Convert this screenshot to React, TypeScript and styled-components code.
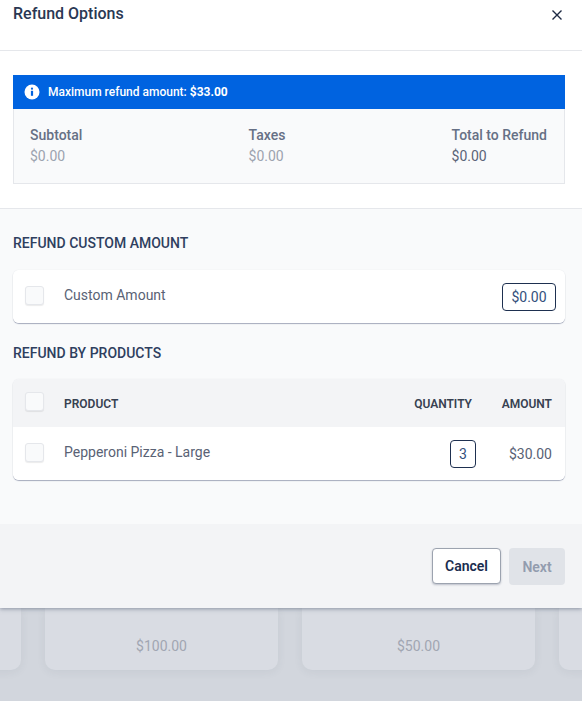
import styled, { createGlobalStyle } from "styled-components";

const GlobalStyle = createGlobalStyle`
  html, body {
    margin: 0;
    padding: 0;
    height: 100%;
    overflow: hidden;
    background: #d2d6dd;
  }
  * { box-sizing: border-box; }
  body { font-family: Roboto, "Liberation Sans", sans-serif; }
`;

const Page = styled.div`
  width: 582px;
  height: 701px;
  display: flex;
  flex-direction: column;
  overflow: hidden;
`;

const Modal = styled.div`
  height: 608px;
  flex: none;
  display: flex;
  flex-direction: column;
  background: #fff;
  box-shadow: 0 1px 4px rgba(75, 85, 110, 0.55);
  position: relative;
`;

const Header = styled.header`
  height: 51px;
  flex: none;
  padding: 5px 19px 0 13px;
  display: flex;
  justify-content: space-between;
  border-bottom: 1px solid #e5e7eb;
`;

const Title = styled.h2`
  margin: 0;
  font-size: 16px;
  line-height: 18px;
  font-weight: 500;
  color: #2a3853;
`;

const CloseButton = styled.button`
  border: none;
  background: none;
  padding: 0;
  margin: 4px 0 0;
  width: 12px;
  height: 12px;
  color: #1e2a44;
  display: flex;
  svg { display: block; }
`;

const Summary = styled.section`
  height: 158px;
  flex: none;
  padding: 24px 17px 24px 13px;
  border-bottom: 1px solid #e5e7eb;
`;

const Alert = styled.div`
  height: 34px;
  display: flex;
  align-items: center;
  gap: 8px;
  padding-left: 11px;
  background: #0063e0;
  color: #fff;
  font-size: 12px;
  font-weight: 500;
  b { font-weight: 700; }
`;

const Totals = styled.div`
  height: 75px;
  display: flex;
  justify-content: space-between;
  padding: 18px 17px 0 16px;
  background: #f9fafb;
  border: 1px solid #e5e7eb;
  border-top: none;
`;

const Stat = styled.div`
  display: flex;
  flex-direction: column;
  gap: 4px;
`;

const StatLabel = styled.span`
  font-size: 14px;
  line-height: 17px;
  font-weight: 500;
  color: #667085;
`;

const StatValue = styled.span<{ $dark?: boolean }>`
  font-size: 14px;
  line-height: 17px;
  color: ${(p) => (p.$dark ? "#5b6478" : "#9ca3af")};
`;

const Body = styled.section`
  flex: 1;
  background: #f9fafb;
  padding: 27px 17px 0 13px;
`;

const SectionTitle = styled.h3<{ $gap: number }>`
  margin: 0 0 ${(p) => p.$gap}px;
  font-size: 14px;
  line-height: 15px;
  font-weight: 500;
  color: #2f3f5f;
`;

const Card = styled.div`
  background: #fff;
  border-radius: 6px;
  box-shadow: 0 0 1px rgba(120, 130, 150, 0.25), 0 1px 1px rgba(100, 110, 140, 0.55);
  margin-bottom: 23px;
  overflow: hidden;
`;

const Row = styled.div<{ $height: number; $head?: boolean; $endPad?: number }>`
  height: ${(p) => p.$height}px;
  display: flex;
  align-items: center;
  padding: 0 ${(p) => p.$endPad ?? 13}px 0 12px;
  background: ${(p) => (p.$head ? "#f3f4f6" : "#fff")};
`;

const Check = styled.span`
  width: 19px;
  height: 19px;
  flex: none;
  margin: 0 20px 3px 0;
  background: #f9fafb;
  border: 1px solid #e5e7eb;
  border-radius: 3px;
  box-shadow: 0 1px 1px rgba(0, 0, 0, 0.08);
`;

const RowText = styled.span`
  flex: 1;
  margin-bottom: 4px;
  font-size: 14px;
  color: #596275;
`;

const BoxValue = styled.span<{ $width: number }>`
  width: ${(p) => p.$width}px;
  height: 28px;
  display: flex;
  align-items: center;
  justify-content: center;
  border: 1px solid #1e3050;
  border-radius: 4px;
  font-size: 14px;
  color: #34507c;
`;

const HeadCell = styled.span<{ $width?: number }>`
  flex: ${(p) => (p.$width ? "none" : "1")};
  width: ${(p) => (p.$width ? `${p.$width}px` : "auto")};
  margin-top: 2px;
  text-align: ${(p) => (p.$width ? "right" : "left")};
  font-size: 12px;
  font-weight: 600;
  color: #374151;
`;

const Amount = styled.span`
  width: 76px;
  text-align: right;
  font-size: 14px;
  color: #596275;
`;

const Footer = styled.footer`
  height: 84px;
  flex: none;
  display: flex;
  justify-content: flex-end;
  gap: 8px;
  padding: 24px 17px 0 0;
  background: #f3f4f6;
`;

const CancelButton = styled.button`
  width: 69px;
  height: 36px;
  border: 1px solid #9ca3af;
  border-radius: 4px;
  background: #fff;
  box-shadow: 0 1px 2px rgba(60, 70, 100, 0.3);
  font: 600 14px Roboto, sans-serif;
  color: #1b2d4f;
  padding: 0;
`;

const NextButton = styled.button`
  width: 56px;
  height: 37px;
  border: none;
  border-radius: 4px;
  background: #e0e3e8;
  font: 600 14px Roboto, sans-serif;
  color: #929cae;
  padding: 0;
`;

const Backdrop = styled.div`
  flex: 1;
  display: flex;
  justify-content: center;
  gap: 24px;
  margin-right: 2px;
`;

const BackCard = styled.div`
  width: 233px;
  height: 62px;
  flex: none;
  padding-top: 30px;
  text-align: center;
  font-size: 14px;
  line-height: 17px;
  color: #a1a6b2;
  background: #d9dce3;
  border-radius: 0 0 10px 10px;
  box-shadow: 0 2px 10px rgba(60, 70, 90, 0.07);
`;

const InfoIcon = () => (
  <svg width="16" height="16" viewBox="0 0 16 16" aria-hidden="true">
    <circle cx="8" cy="8" r="7.5" fill="#fff" />
    <circle cx="8" cy="4.7" r="1.1" fill="#0063e0" />
    <rect x="6.9" y="6.8" width="2.2" height="5" fill="#0063e0" />
  </svg>
);

const CloseIcon = () => (
  <svg width="12" height="12" viewBox="0 0 12 12" fill="none" aria-hidden="true">
    <path d="M1.5 1.5l9 9M10.5 1.5l-9 9" stroke="currentColor" strokeWidth="1.4" />
  </svg>
);

export default function App() {
  return (
    <Page>
      <GlobalStyle />
      <Modal>
        <Header>
          <Title>Refund Options</Title>
          <CloseButton>
            <CloseIcon />
          </CloseButton>
        </Header>
        <Summary>
          <Alert>
            <InfoIcon />
            <span>
              Maximum refund amount: <b>$33.00</b>
            </span>
          </Alert>
          <Totals>
            <Stat>
              <StatLabel>Subtotal</StatLabel>
              <StatValue>$0.00</StatValue>
            </Stat>
            <Stat>
              <StatLabel>Taxes</StatLabel>
              <StatValue>$0.00</StatValue>
            </Stat>
            <Stat>
              <StatLabel>Total to Refund</StatLabel>
              <StatValue $dark>$0.00</StatValue>
            </Stat>
          </Totals>
        </Summary>
        <Body>
          <SectionTitle $gap={19}>REFUND CUSTOM AMOUNT</SectionTitle>
          <Card>
            <Row $height={53} $endPad={9}>
              <Check />
              <RowText>Custom Amount</RowText>
              <BoxValue $width={54}>$0.00</BoxValue>
            </Row>
          </Card>
          <SectionTitle $gap={18}>REFUND BY PRODUCTS</SectionTitle>
          <Card>
            <Row $height={48} $head>
              <Check />
              <HeadCell>PRODUCT</HeadCell>
              <HeadCell $width={96}>QUANTITY</HeadCell>
              <HeadCell $width={80}>AMOUNT</HeadCell>
            </Row>
            <Row $height={53}>
              <Check />
              <RowText>Pepperoni Pizza - Large</RowText>
              <BoxValue $width={26}>3</BoxValue>
              <Amount>$30.00</Amount>
            </Row>
          </Card>
        </Body>
        <Footer>
          <CancelButton>Cancel</CancelButton>
          <NextButton>Next</NextButton>
        </Footer>
      </Modal>
      <Backdrop>
        <BackCard />
        <BackCard>$100.00</BackCard>
        <BackCard>$50.00</BackCard>
        <BackCard />
      </Backdrop>
    </Page>
  );
}
